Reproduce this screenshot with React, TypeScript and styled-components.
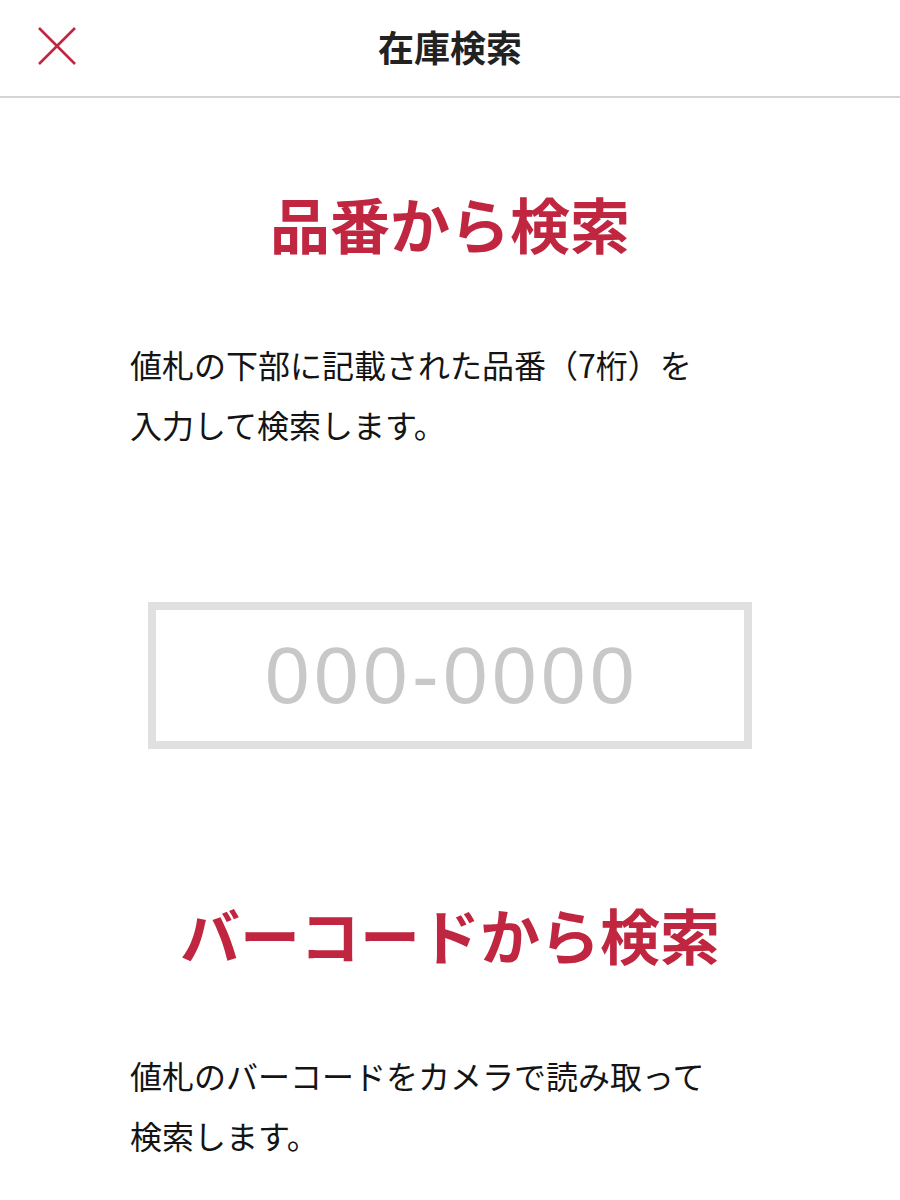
import React from "react";
import styled, { createGlobalStyle } from "styled-components";

const Global = createGlobalStyle`
  html, body {
    margin: 0;
    padding: 0;
    background: #ffffff;
  }
  body {
    font-family: "Noto Sans CJK JP", "Noto Sans", sans-serif;
    color: #1a1a1a;
  }
  * { box-sizing: border-box; }
`;

const ACCENT = "#c02640";

const Page = styled.div`
  width: 900px;
  min-height: 1200px;
  display: flex;
  flex-direction: column;
`;

const Header = styled.header`
  height: 98px;
  display: grid;
  grid-template-columns: 1fr auto 1fr;
  align-items: center;
  border-bottom: 2px solid #d4d4d4;
  padding: 0 38px 4px;
`;

const CloseButton = styled.button`
  justify-self: start;
  width: 38px;
  height: 38px;
  padding: 0;
  border: none;
  background: transparent;
  display: flex;
  cursor: pointer;
`;

const Title = styled.h1`
  margin: 0;
  font-size: 36px;
  line-height: 40px;
  font-weight: 700;
  color: #222222;
`;

const Content = styled.main`
  display: flex;
  flex-direction: column;
  padding: 0 130px;
`;

const Section = styled.section<{ $top: number }>`
  display: flex;
  flex-direction: column;
  margin-top: ${(p) => p.$top}px;
`;

const Heading = styled.h2`
  margin: 0;
  text-align: center;
  font-size: 60px;
  line-height: 60px;
  font-weight: 700;
  color: ${ACCENT};
  white-space: nowrap;
`;

const Description = styled.p`
  margin: 81px 0 0;
  font-size: 32px;
  line-height: 60px;
  font-weight: 400;
  color: #141414;
`;

const CodeInput = styled.input`
  align-self: center;
  margin-top: 148px;
  width: 604px;
  height: 147px;
  border: 8px solid #e0e0e0;
  border-radius: 0;
  outline: none;
  background: #ffffff;
  text-align: center;
  font-family: "Liberation Sans", Arial, sans-serif;
  font-size: 80px;
  letter-spacing: 4.5px;
  color: #333;
  padding: 0 0 0 4px;
  &::placeholder {
    color: #c8c8c8;
  }
`;

const CloseIcon = () => (
  <svg width="38" height="38" viewBox="0 0 38 38" fill="none">
    <path d="M1 1 L37 37 M37 1 L1 37" stroke={ACCENT} strokeWidth="2.6" strokeLinecap="butt" />
  </svg>
);

export default function App() {
  return (
    <>
      <Global />
      <Page>
        <Header>
          <CloseButton aria-label="閉じる">
            <CloseIcon />
          </CloseButton>
          <Title>在庫検索</Title>
          <span />
        </Header>
        <Content>
          <Section $top={95}>
            <Heading>品番から検索</Heading>
            <Description>
              値札の下部に記載された品番（7桁）を
              <br />
              入力して検索します。
            </Description>
            <CodeInput placeholder="000-0000" inputMode="numeric" />
          </Section>
          <Section $top={155}>
            <Heading>バーコードから検索</Heading>
            <Description>
              値札のバーコードをカメラで読み取って
              <br />
              検索します。
            </Description>
          </Section>
        </Content>
      </Page>
    </>
  );
}
